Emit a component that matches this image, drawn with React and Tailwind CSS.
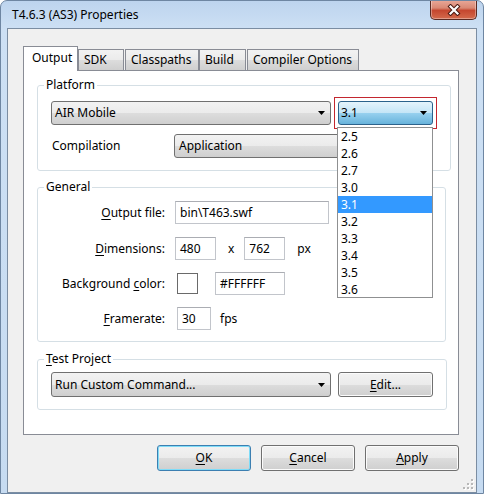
import React from 'react'

const FONT = "font-['Segoe_UI','Noto_Sans',sans-serif]"

function Arrow() {
  return (
    <svg width="7" height="4" viewBox="0 0 7 4" className="shrink-0">
      <path d="M0 0h7L3.5 4z" fill="#000" />
    </svg>
  )
}

function Combo({ label, className = '', tone = 'gray' }) {
  const skin =
    tone === 'blue'
      ? 'border-[#2c628b] bg-[linear-gradient(#e5f4fc,#c4e5f6_50%,#98d1ef_50%,#68b3db)]'
      : 'border-[#707070] bg-[linear-gradient(#f2f2f2,#ebebeb_50%,#dddddd_50%,#cfcfcf)]'

  return (
    <div className={`flex items-center justify-between rounded-[3px] border pr-[5px] ${skin} ${className}`}>
      <span className="leading-[16px]">{label}</span>
      <Arrow />
    </div>
  )
}

function Key({ children }) {
  return <span className="underline decoration-1 underline-offset-[2px]">{children}</span>
}

function Field({ value, className = '' }) {
  return (
    <div
      className={`flex h-[23px] items-center border border-[#c2c5cb] border-t-[#abadb3] bg-white pl-[4px] leading-[16px] ${className}`}
    >
      {value}
    </div>
  )
}

function Group({ title, className = '', children }) {
  return (
    <fieldset className={`ml-[13px] w-[409px] rounded-[3px] border border-[#d5dfe5] ${className}`}>
      <legend className="ml-[6px] px-[2px] leading-[16px]">{title}</legend>
      {children}
    </fieldset>
  )
}

function Button({ children, primary = false, className = '' }) {
  const skin = primary
    ? 'border-[#3c7fb1] shadow-[inset_0_0_0_1px_#7fdcf8]'
    : 'border-[#707070] shadow-[inset_0_0_0_1px_#fbfbfb]'

  return (
    <div
      className={`flex items-center justify-center rounded-[3px] border bg-[linear-gradient(#f2f2f2,#ebebeb_50%,#dddddd_50%,#cfcfcf)] leading-[16px] ${skin} ${className}`}
    >
      {children}
    </div>
  )
}

function Tab({ label, selected = false, className = '' }) {
  if (selected) {
    return (
      <div className={`relative z-10 -mb-px flex h-[25px] items-start border border-b-0 border-[#898c95] bg-white pl-[8px] pt-[3px] leading-[16px] ${className}`}>
        {label}
      </div>
    )
  }

  return (
    <div
      className={`flex h-[21px] items-start border border-b-0 border-[#898c95] bg-[linear-gradient(#f2f2f2,#ebebeb_50%,#dddddd_50%,#cfcfcf)] pl-[5px] pt-[2px] leading-[16px] ${className}`}
    >
      {label}
    </div>
  )
}

const versions = ['2.5', '2.6', '2.7', '3.0', '3.1', '3.2', '3.3', '3.4', '3.5', '3.6']

function CloseButton() {
  return (
    <div className="-mt-px flex h-[20px] w-[47px] items-center justify-center rounded-b-[5px] border border-t-0 border-[#5a2a22] bg-[linear-gradient(#eaa999,#d98874_42%,#c5472f_55%,#d46a4c)] shadow-[inset_0_0_0_1px_rgba(255,255,255,0.35)]">
      <svg width="14" height="12" viewBox="0 0 14 12">
        <path d="M3.5 2.5 L10.5 9.5 M10.5 2.5 L3.5 9.5" stroke="#4a1a12" strokeWidth="4.2" strokeLinecap="square" />
        <path d="M3.5 2.5 L10.5 9.5 M10.5 2.5 L3.5 9.5" stroke="#ffffff" strokeWidth="2.2" strokeLinecap="square" />
      </svg>
    </div>
  )
}

function SizeGrip() {
  const dots = [
    [8, 0],
    [4, 4],
    [8, 4],
    [0, 8],
    [4, 8],
    [8, 8],
  ]
  return (
    <svg width="11" height="11" viewBox="0 0 11 11" className="absolute bottom-[2px] right-[2px]">
      {dots.map(([x, y]) => (
        <g key={`${x}-${y}`}>
          <rect x={x + 1} y={y + 1} width="2" height="2" fill="#ffffff" />
          <rect x={x} y={y} width="2" height="2" fill="#b8b8b8" />
        </g>
      ))}
    </svg>
  )
}

export default function App() {
  return (
    <div
      className={`relative h-[494px] w-[484px] overflow-hidden rounded-t-[7px] border border-[#6e86a2] bg-[linear-gradient(#bdd4ee,#cde0f4_28px,#c6dbf1)] px-[6px] text-[12px] text-black ${FONT}`}
    >
      <div className="flex h-[27px] items-start justify-between">
        <div className="pl-[5px] pt-[6px] leading-[16px]">T4.6.3 (AS3) Properties</div>
        <CloseButton />
      </div>

      <div className="relative h-[465px] border border-[#7b8da2] bg-[#f0f0f0] pl-[15px] pt-[17px]">
        <div className="flex h-[24px] items-end">
          <Tab label="Output" selected className="w-[55px]" />
          <Tab label="SDK" className="w-[46px]" />
          <Tab label="Classpaths" className="ml-[1px] w-[74px]" />
          <Tab label="Build" className="w-[47px]" />
          <Tab label="Compiler Options" className="ml-[1px] w-[112px]" />
        </div>

        <div className="h-[365px] w-[436px] border border-[#898c95] bg-white pt-[6px]">
          <Group title="Platform">
            <div className="px-[13px] pb-[12px] pt-[8px]">
              <div className="flex items-start">
                <Combo label="AIR Mobile" className="h-[24px] w-[280px] pl-[3px]" />
                <div className="relative z-20 -my-[4px] ml-[3px] border border-[#c3272f] p-[3px]">
                  <Combo label="3.1" tone="blue" className="h-[24px] w-[95px] pl-[2px]" />
                  <div className="absolute left-[2px] top-[29px] -z-10 h-[171px] w-[96px] border border-[#8f9091] bg-white">
                    {versions.map((version) => (
                      <div
                        key={version}
                        className={`h-[17px] pl-[3px] leading-[17px] ${
                          version === '3.1' ? 'bg-[#3399ff] text-white' : ''
                        }`}
                      >
                        {version}
                      </div>
                    ))}
                  </div>
                </div>
              </div>
              <div className="mt-[9px] flex items-center">
                <div className="w-[123px] pl-[1px] leading-[16px]">Compilation</div>
                <Combo label="Application" className="h-[24px] w-[259px] pl-[4px]" />
              </div>
            </div>
          </Group>

          <Group title="General" className="mt-[8px]">
            <div className="px-[13px] pb-[11px] pt-[6px]">
              <div className="flex h-[23px] items-center gap-[10px]">
                <div className="w-[114px] text-right leading-[16px]">
                  <Key>O</Key>utput file:
                </div>
                <Field value="bin\T463.swf" className="w-[154px]" />
              </div>
              <div className="mt-[13px] flex h-[23px] items-center">
                <div className="w-[114px] text-right leading-[16px]">
                  <Key>D</Key>imensions:
                </div>
                <Field value="480" className="ml-[10px] w-[41px]" />
                <span className="ml-[12px] leading-[16px]">x</span>
                <Field value="762" className="ml-[10px] w-[41px]" />
                <span className="ml-[12px] leading-[16px]">px</span>
              </div>
              <div className="mt-[12px] flex h-[23px] items-center">
                <div className="w-[114px] text-right leading-[16px]">
                  Background <Key>c</Key>olor:
                </div>
                <div className="ml-[12px] h-[21px] w-[21px] border border-[#6a6a6a] bg-white" />
                <Field value="#FFFFFF" className="ml-[17px] w-[70px]" />
              </div>
              <div className="mt-[12px] flex h-[23px] items-center">
                <div className="w-[114px] text-right leading-[16px]">
                  <Key>F</Key>ramerate:
                </div>
                <Field value="30" className="ml-[12px] w-[34px]" />
                <span className="ml-[9px] leading-[16px]">fps</span>
              </div>
            </div>
          </Group>

          <Group
            title={
              <>
                <Key>T</Key>est Project
              </>
            }
            className="mt-[9px]"
          >
            <div className="flex items-center px-[13px] pb-[12px] pt-[5px]">
              <Combo label="Run Custom Command..." className="h-[25px] w-[280px] pl-[3px]" />
              <Button className="ml-[7px] h-[25px] w-[95px]">
                <Key>E</Key>dit...
              </Button>
            </div>
          </Group>
        </div>

        <div className="mt-[10px] flex w-[436px] justify-end gap-[10px]">
          <Button primary className="h-[26px] w-[94px]">
            <Key>O</Key>K
          </Button>
          <Button className="h-[26px] w-[94px]">
            <Key>C</Key>ancel
          </Button>
          <Button className="h-[26px] w-[94px]">
            <Key>A</Key>pply
          </Button>
        </div>

        <SizeGrip />
      </div>
    </div>
  )
}
